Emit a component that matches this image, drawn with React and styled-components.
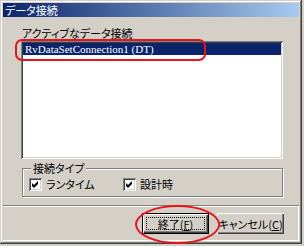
import React from "react";
import styled, { createGlobalStyle } from "styled-components";

const face = "#d4d0c8";
const shadow = "#808080";
const dark = "#404040";

const GlobalStyle = createGlobalStyle`
  html, body {
    margin: 0;
    padding: 0;
    background: ${face};
  }
  body {
    font-family: "Noto Sans CJK JP", "Liberation Sans", sans-serif;
    font-size: 11px;
    font-feature-settings: "palt";
    color: #000;
  }
`;

const Window = styled.div`
  position: relative;
  width: 302px;
  height: 244px;
  box-sizing: border-box;
  padding: 3px;
  background: ${face};
  box-shadow: inset -1px -1px ${dark}, inset 1px 1px ${face},
    inset -2px -2px ${shadow}, inset 2px 2px #fff;
  display: flex;
  flex-direction: column;
`;

const TitleBar = styled.div`
  height: 14px;
  line-height: 14px;
  padding-left: 2px;
  color: #fff;
  background: linear-gradient(to right, #0a246a, #a6caf0);
  white-space: nowrap;
`;

const Body = styled.div`
  height: 188px;
  box-sizing: border-box;
  padding: 9px 0 0 18px;
  display: flex;
  flex-direction: column;
`;

const Label = styled.div`
  height: 14px;
  line-height: 14px;
  padding-left: 1px;
  margin-bottom: 1px;
`;

const ListBox = styled.div`
  width: 262px;
  height: 118px;
  box-sizing: border-box;
  padding: 2px;
  background: #fff;
  box-shadow: inset 1px 1px ${shadow}, inset -1px -1px #fff,
    inset 2px 2px ${dark}, inset -2px -2px ${face};
`;

const ListItem = styled.div`
  height: 12px;
  line-height: 12px;
  padding-left: 2px;
  font-family: "Liberation Serif", serif;
  font-size: 11px;
  color: ${(p) => (p.selected ? "#fff" : "#000")};
  background: ${(p) => (p.selected ? "#0a246a" : "transparent")};
  white-space: nowrap;
`;

const Group = styled.div`
  position: relative;
  width: 261px;
  height: 29px;
  box-sizing: border-box;
  margin: 9px 0 0 1px;
  padding: 9px 0 0 6px;
  border: 1px solid ${shadow};
  box-shadow: inset 1px 1px #fff, 1px 1px #fff;
  display: flex;
`;

const Legend = styled.span`
  position: absolute;
  top: -8px;
  left: 8px;
  padding: 0 2px;
  line-height: 14px;
  background: ${face};
`;

const CheckItem = styled.label`
  width: ${(p) => p.width}px;
  display: flex;
  align-items: center;
  gap: 4px;
  height: 13px;
  line-height: 13px;
  white-space: nowrap;
`;

const Box = styled.span`
  width: 13px;
  height: 13px;
  flex: none;
  background: #fff;
  box-shadow: inset 1px 1px ${shadow}, inset -1px -1px #fff,
    inset 2px 2px ${dark}, inset -2px -2px ${face};
  display: flex;
`;

const Footer = styled.div`
  height: 36px;
  box-sizing: border-box;
  border-top: 1px solid ${shadow};
  box-shadow: inset 0 1px #fff, inset -1px -1px #fff;
  padding: 7px 15px 0 0;
  display: flex;
  justify-content: flex-end;
  align-items: flex-start;
  gap: 8px;
`;

const Button = styled.button`
  position: relative;
  width: 67px;
  height: 21px;
  box-sizing: border-box;
  padding: 0;
  margin: 0;
  display: flex;
  align-items: center;
  justify-content: center;
  white-space: nowrap;
  font: inherit;
  font-feature-settings: "palt";
  color: #000;
  background: ${face};
  border: ${(p) => (p.primary ? "1px solid #000" : "none")};
  box-shadow: inset 1px 1px #fff, inset -1px -1px ${dark},
    inset -2px -2px ${shadow}, inset 2px 2px ${face};

  &::after {
    content: "";
    display: ${(p) => (p.primary ? "block" : "none")};
    position: absolute;
    inset: 3px;
    border: 1px dotted #000;
  }

  u {
    text-decoration-thickness: 1px;
    text-underline-offset: 1px;
  }
`;

const Mark = styled.div`
  position: absolute;
  border: 2px solid #e8141c;
  pointer-events: none;
  left: ${(p) => p.x}px;
  top: ${(p) => p.y}px;
  width: ${(p) => p.w}px;
  height: ${(p) => p.h}px;
  border-radius: ${(p) => p.r};
`;

const Check = () => (
  <Box>
    <svg width="13" height="13" viewBox="0 0 13 13">
      <polygon points="3,5 5,7 9,3 9,6 5,10 3,8" fill="#000" />
    </svg>
  </Box>
);

export default function App() {
  return (
    <>
      <GlobalStyle />
      <Window>
        <TitleBar>データ接続</TitleBar>
        <Body>
          <Label>アクティブなデータ接続</Label>
          <ListBox>
            <ListItem selected>RvDataSetConnection1 (DT)</ListItem>
          </ListBox>
          <Group>
            <Legend>接続タイプ</Legend>
            <CheckItem width={94}>
              <Check />
              ランタイム
            </CheckItem>
            <CheckItem width={80}>
              <Check />
              設計時
            </CheckItem>
          </Group>
        </Body>
        <Footer>
          <Button primary>
            終了(<u>F</u>)
          </Button>
          <Button>
            キャンセル(<u>C</u>)
          </Button>
        </Footer>
        <Mark x={15} y={39} w={187} h={18} r="7px" />
        <Mark x={135} y={205} w={81} h={35} r="50%" />
      </Window>
    </>
  );
}
